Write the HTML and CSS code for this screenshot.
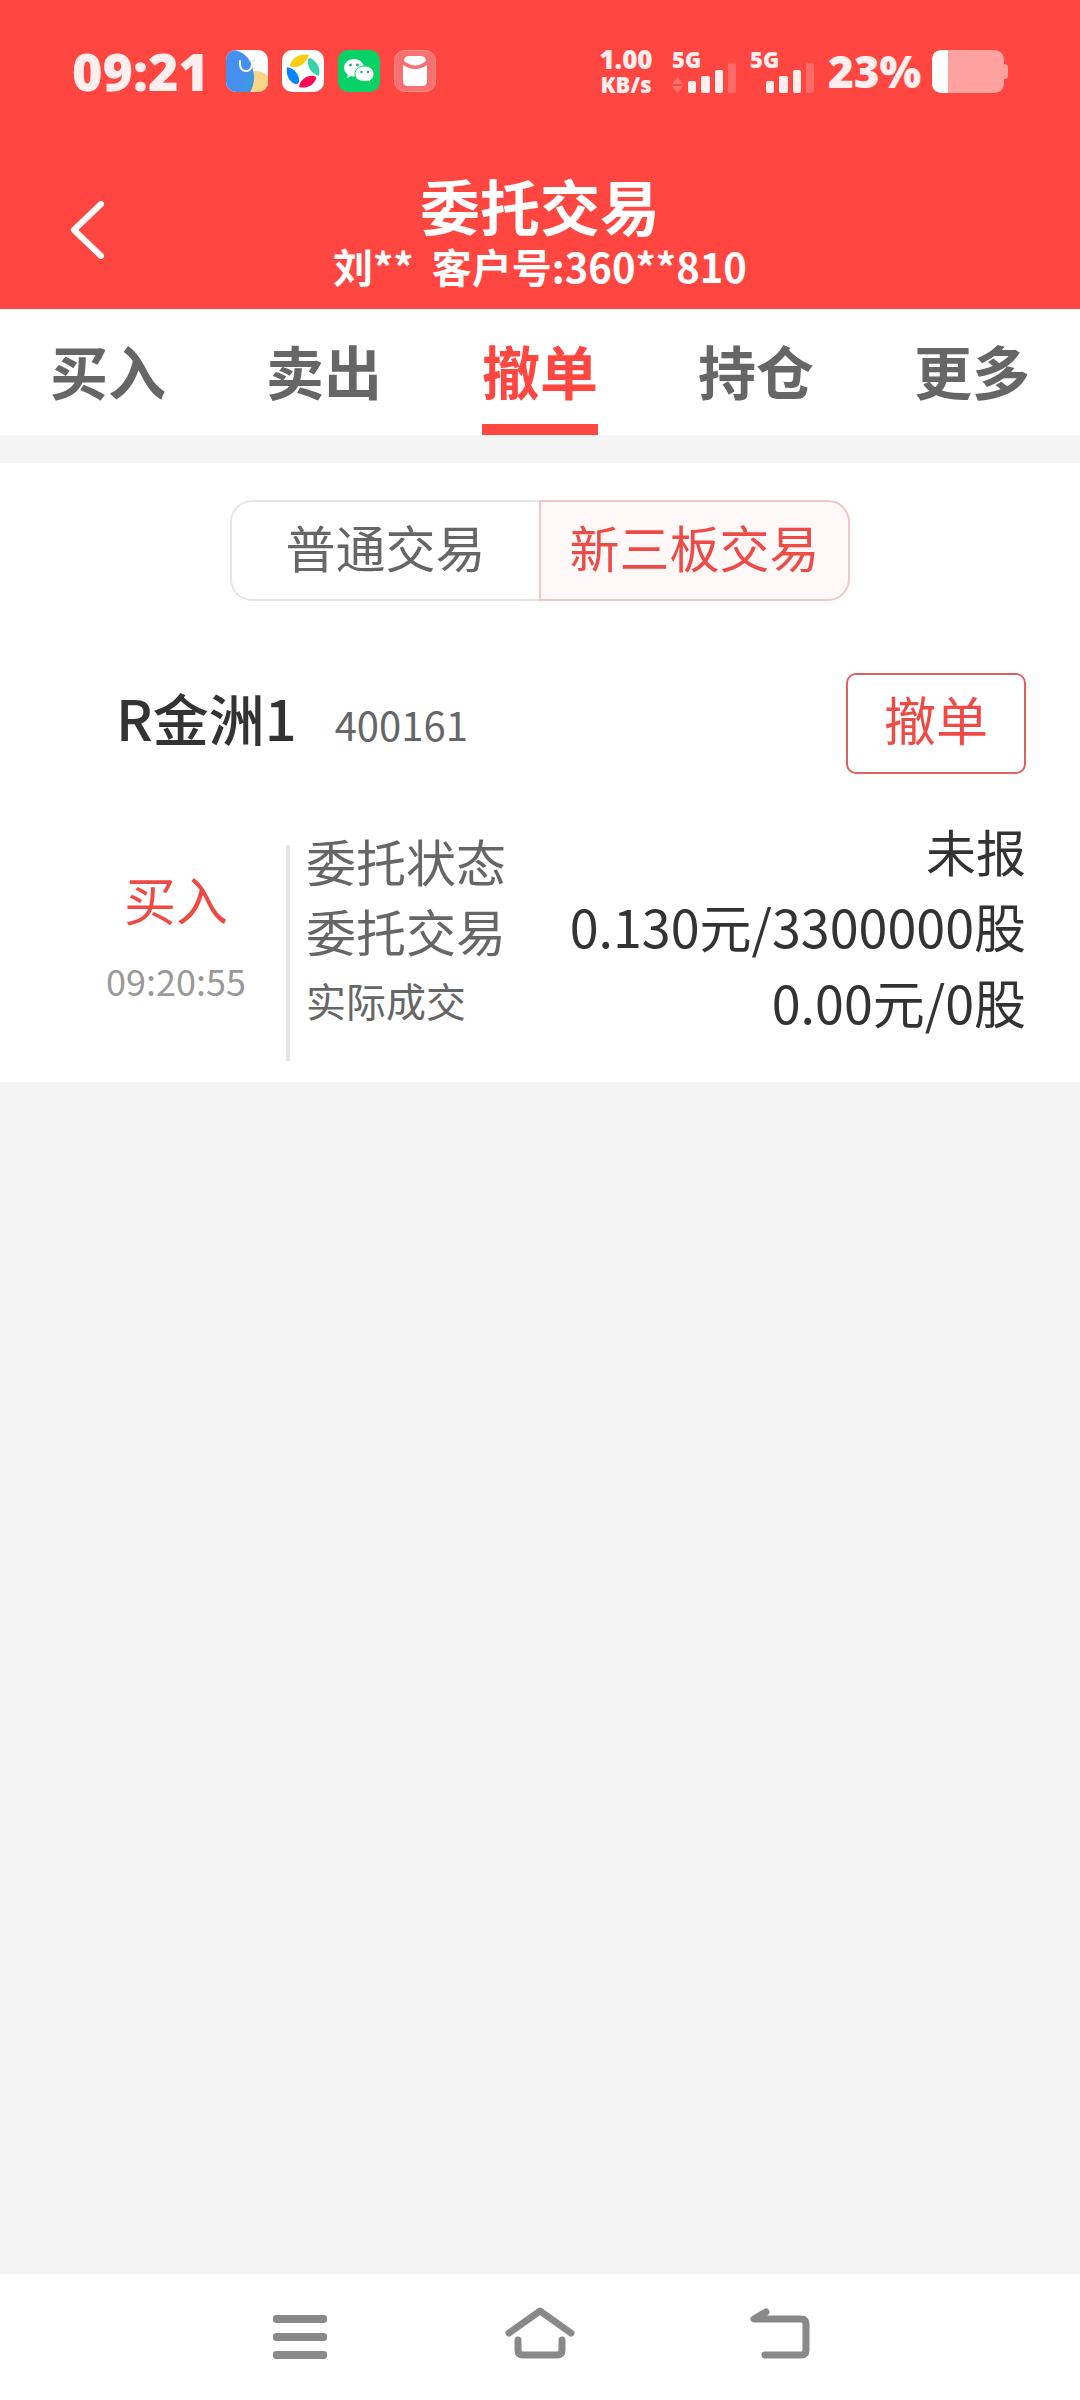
FILE: index.html
```html
<!DOCTYPE html>
<html lang="zh-CN">
<head>
<meta charset="utf-8">
<meta name="viewport" content="width=device-width, initial-scale=1">
<title>委托交易</title>
<link rel="stylesheet" href="styles.css">
</head>
<body>
<header class="top">
  <div class="status">
    <div class="status-left">
      <span class="clock">09:21</span>
      <svg class="app-icon" viewBox="0 0 42 42" aria-hidden="true">
        <defs><clipPath id="tile"><rect width="42" height="42" rx="10"/></clipPath></defs>
        <g clip-path="url(#tile)">
          <rect width="42" height="42" fill="#fff"/>
          <circle cx="30" cy="37" r="16" fill="#fbd587"/>
          <path d="M0 0H9C19 3 25 9 27 20C29 29 27 37 24 42H0Z" fill="#4590ef"/>
          <path d="M27 21C29 29 27 37 24 42H16C17 33 20 25 27 21Z" fill="#3e97e3"/>
          <path d="M14 11V15C15 23 25 23 26 15" fill="none" stroke="#fff" stroke-width="2" stroke-linecap="round"/>
          <path d="M26 11q2-2 3 0" fill="none" stroke="#b9c6d6" stroke-width="1"/>
        </g>
      </svg>
      <svg class="app-icon" viewBox="0 0 42 42" aria-hidden="true">
        <rect width="42" height="42" rx="10" fill="#fff"/>
        <path d="M8 15C10 8 18 3 27 5C25 12 18 18 11 17Q8 17 8 15Z" fill="#fbcc12"/>
        <path d="M28 8C35 11 39 18 37 26C30 24 25 17 26 10Q26 8 28 8Z" fill="#34d3a8"/>
        <path d="M5 17C12 18 18 25 17 32Q16 35 13 34C6 31 4 24 5 17Z" fill="#0a84ff"/>
        <path d="M17 37C18 30 25 25 32 26Q35 27 34 29C31 36 24 39 17 37Z" fill="#fb0a56"/>
      </svg>
      <svg class="app-icon" viewBox="0 0 42 42" aria-hidden="true">
        <rect width="42" height="42" rx="10" fill="#07d267"/>
        <path d="M16 9C10 9 6 13 6 18C6 21 8 23 10 25L9 28L13 26L16 26.500C22 26.500 26 22 26 18C26 13 22 9 16 9Z" fill="#fff"/>
        <path d="M26.500 16C21 16 17 19.500 17 24C17 28.500 21 31.500 26.500 31.500L30 31L33 32.500L32.500 30C35 28.500 36 26.500 36 24C36 19.500 32 16 26.500 16Z" fill="#fff" stroke="#07d267" stroke-width="1"/>
        <g fill="#07b85a"><circle cx="12.500" cy="15" r="1.400"/><circle cx="19.500" cy="15" r="1.400"/><circle cx="23.500" cy="22" r="1.200"/><circle cx="30" cy="22" r="1.200"/></g>
      </svg>
      <svg class="app-icon" viewBox="0 0 42 42" aria-hidden="true">
        <rect x="0.500" y="0.500" width="41" height="41" rx="10" fill="#f97070" stroke="#fb8c8c"/>
        <path d="M9 15Q21 23 33 15V31Q33 36 28 36H14Q9 36 9 31Z" fill="#fff"/>
        <path d="M10 10Q11 6 15 6H27Q31 6 32 10Q32 12 29 13Q21 18 13 13Q10 12 10 10Z" fill="#fff"/>
        <path d="M9 13Q21 22 33 13" fill="none" stroke="#f97070" stroke-width="2"/>
      </svg>
    </div>
    <div class="status-right">
      <div class="speed"><span class="speed-value">1.00</span><span class="speed-unit">KB/s</span></div>
      <div class="signal">
        <span class="net">5G</span>
        <svg class="bars" viewBox="0 0 64 31" aria-hidden="true">
          <path d="M0 22L5.500 15L11 22ZM0 24L5.500 31L11 24Z" fill="#ff7370"/>
          <g fill="#ffeeee"><rect x="16" y="19" width="8" height="12" rx="2"/><rect x="29" y="14" width="9" height="17" rx="2"/><rect x="43" y="8" width="8" height="23" rx="2"/></g>
          <rect x="56" y="1" width="8" height="30" rx="2" fill="#ff6b67"/>
        </svg>
      </div>
      <div class="signal">
        <span class="net">5G</span>
        <svg class="bars" viewBox="0 0 64 31" aria-hidden="true">
          <g fill="#ffeeee"><rect x="16" y="19" width="8" height="12" rx="2"/><rect x="29" y="14" width="9" height="17" rx="2"/><rect x="43" y="8" width="8" height="23" rx="2"/></g>
          <rect x="56" y="1" width="8" height="30" rx="2" fill="#ff6b67"/>
        </svg>
      </div>
      <span class="percent">23%</span>
      <svg class="battery" viewBox="0 0 76 43" aria-hidden="true">
        <path d="M11 0H61Q72 0 72 11V14Q76 14 76 17V26Q76 29 72 29V32Q72 43 61 43H11Q0 43 0 32V11Q0 0 11 0Z" fill="#ffa2a0"/>
        <path d="M16 0V43H11Q0 43 0 32V11Q0 0 11 0Z" fill="#fff"/>
      </svg>
    </div>
  </div>
  <div class="app-bar">
    <button class="back" type="button" aria-label="返回">
      <svg viewBox="0 0 34 58" width="34" height="58" aria-hidden="true"><path d="M31 3L4 29L31 55" fill="none" stroke="#fff" stroke-width="6" stroke-linecap="round" stroke-linejoin="round"/></svg>
    </button>
    <div class="heading">
      <h1 class="title">委托交易</h1>
      <p class="account">刘**&nbsp; 客户号:360**810</p>
    </div>
  </div>
</header>
<nav class="tabs">
  <a class="tab" href="#buy">买入</a>
  <a class="tab" href="#sell">卖出</a>
  <a class="tab tab-active" href="#cancel" aria-current="page">撤单</a>
  <a class="tab" href="#position">持仓</a>
  <a class="tab" href="#more">更多</a>
</nav>
<main class="content">
  <div class="panel">
    <div class="segment">
      <button class="seg seg-first" type="button">普通交易</button>
      <button class="seg seg-active" type="button" aria-pressed="true">新三板交易</button>
    </div>
    <article class="order">
      <div class="order-head">
        <div class="stock"><h2 class="stock-name">R金洲1</h2><span class="stock-code">400161</span></div>
        <button class="cancel" type="button">撤单</button>
      </div>
      <div class="order-body">
        <div class="side"><span class="side-type">买入</span><time class="side-time">09:20:55</time></div>
        <div class="labels"><span>委托状态</span><span>委托交易</span><span class="label-small">实际成交</span></div>
        <div class="values"><span class="value-state">未报</span><span>0.130元/3300000股</span><span>0.00元/0股</span></div>
      </div>
    </article>
  </div>
</main>
<footer class="sys-nav">
  <button class="sys" type="button" aria-label="菜单">
    <svg width="72" height="54" viewBox="0 0 72 54" aria-hidden="true"><g fill="#898989"><rect x="9" y="9" width="54" height="8" rx="3"/><rect x="9" y="27" width="54" height="8" rx="3"/><rect x="9" y="45" width="54" height="8" rx="3"/></g></svg>
  </button>
  <button class="sys" type="button" aria-label="主页">
    <svg width="72" height="54" viewBox="0 0 72 54" aria-hidden="true"><g fill="none" stroke="#898989" stroke-width="7" stroke-linecap="round" stroke-linejoin="round"><path d="M5 27L36 5L67 27"/><path d="M14 34V44Q14 49 19 49H53Q58 49 58 44V34"/></g></svg>
  </button>
  <button class="sys" type="button" aria-label="返回上一级">
    <svg width="72" height="54" viewBox="0 0 72 54" aria-hidden="true"><path d="M22 6L10 13H57Q62 13 62 18V44Q62 49 57 49H21" fill="none" stroke="#898989" stroke-width="7" stroke-linecap="round" stroke-linejoin="round"/><path d="M10 13L22 6V13Z" fill="#898989"/></svg>
  </button>
</footer>
</body>
</html>
```
FILE: styles.css
```css
* {
  box-sizing: border-box;
}

body {
  margin: 0;
  min-height: 100vh;
  display: flex;
  flex-direction: column;
  background: #f4f4f4;
  color: #333;
  font-family: "Noto Sans CJK SC", sans-serif;
}

h1, h2, p {
  margin: 0;
}

button {
  padding: 0;
  border: 0;
  background: none;
  font-family: inherit;
  color: inherit;
}

svg {
  display: block;
}

.top {
  background: #ff4641;
  color: #fff;
}

/* status bar */
.status {
  display: flex;
  justify-content: space-between;
  padding: 42px 72px 47px;
  color: #ffeeee;
  font-family: "Noto Sans", sans-serif;
  font-weight: 900;
}

.status-left,
.status-right {
  display: flex;
  align-items: center;
  height: 58px;
}

.status-left {
  gap: 14px;
}

.clock {
  width: 140px;
  font-size: 52px;
  line-height: 56px;
}

.app-icon {
  width: 42px;
  height: 42px;
}

.speed {
  display: flex;
  flex-direction: column;
  align-items: center;
  width: 56px;
  margin-right: 18px;
}

.speed-value {
  font-size: 26px;
  line-height: 26px;
}

.speed-unit {
  font-size: 22px;
  line-height: 24px;
}

.signal {
  width: 64px;
  margin-right: 14px;
}

.net {
  display: block;
  font-size: 22px;
  line-height: 18px;
  height: 12px;
}

.bars {
  width: 64px;
  height: 31px;
}

.percent {
  width: 104px;
  font-size: 44px;
  line-height: 56px;
}

.battery {
  width: 76px;
  height: 43px;
}

/* title bar */
.app-bar {
  display: grid;
  grid-template-columns: 1fr auto 1fr;
  align-items: start;
  padding: 26px 0 18px;
}

.back {
  justify-self: start;
  padding: 28px 0 0 70px;
}

.heading {
  display: grid;
  gap: 4px;
  text-align: center;
}

.title {
  font-size: 60px;
  line-height: 64px;
  font-weight: 700;
}

.account {
  font-size: 40px;
  line-height: 50px;
  font-weight: 700;
}

/* tabs */
.tabs {
  display: flex;
  justify-content: space-around;
  padding-top: 8px;
  background: #fff;
}

.tab {
  border-bottom: 11px solid transparent;
  color: #666;
  font-size: 58px;
  line-height: 107px;
  font-weight: 700;
  text-decoration: none;
}

.tab-active {
  border-color: #ff4641;
  color: #ff4641;
}

.content {
  flex: 1;
  padding-top: 28px;
}

.panel {
  padding: 37px 0 21px;
  background: #fff;
}

.segment {
  display: flex;
  width: 620px;
  max-width: 100%;
  margin: 0 auto;
}

.seg {
  flex: 1;
  height: 101px;
  padding-bottom: 10px;
  border: 2px solid #f3c6c6;
  font-size: 50px;
}

.seg-first {
  border-color: #e6e6e6;
  border-right: 0;
  border-radius: 22px 0 0 22px;
  color: #666;
}

.seg-active {
  border-radius: 0 22px 22px 0;
  background: #fff8f8;
  color: #ee4b46;
}

/* order card */
.order {
  padding: 72px 54px 0 66px;
}

.order-head {
  display: flex;
  justify-content: space-between;
  align-items: center;
  padding-left: 50px;
}

.stock {
  display: flex;
  align-items: baseline;
  gap: 38px;
  padding-bottom: 10px;
}

.stock-name {
  font-size: 56px;
  line-height: 64px;
  font-weight: 500;
}

.stock-code {
  color: #666;
  font-size: 40px;
}

.cancel {
  width: 180px;
  height: 101px;
  padding-bottom: 10px;
  border: 2px solid #e0615d;
  border-radius: 10px;
  color: #ee4b46;
  font-size: 52px;
}

.order-body {
  display: flex;
  padding-top: 38px;
}

.side {
  display: flex;
  flex-direction: column;
  align-items: center;
  gap: 14px;
  width: 220px;
  padding-top: 52px;
}

.side-type {
  color: #ee4b46;
  font-size: 52px;
  line-height: 70px;
}

.side-time {
  color: #999;
  font-size: 36px;
  line-height: 64px;
}

.labels {
  display: flex;
  flex-direction: column;
  height: 216px;
  margin-top: 33px;
  padding-left: 16px;
  border-left: 4px solid #e6e6e6;
  color: #666;
  font-size: 50px;
  line-height: 70px;
}

.labels span:first-child {
  margin-top: -20px;
}

.labels .label-small {
  font-size: 40px;
}

.values {
  flex: 1;
  display: flex;
  flex-direction: column;
  font-size: 52px;
  line-height: 76px;
  text-align: right;
}

.values .value-state {
  font-size: 50px;
}

/* system navigation */
.sys-nav {
  display: grid;
  grid-template-columns: 3fr 4fr 4fr 4fr 3fr;
  padding: 32px 0 40px;
  background: #fff;
}

.sys {
  display: grid;
  place-items: center;
}

.sys:first-child {
  grid-column: 2;
}
```
